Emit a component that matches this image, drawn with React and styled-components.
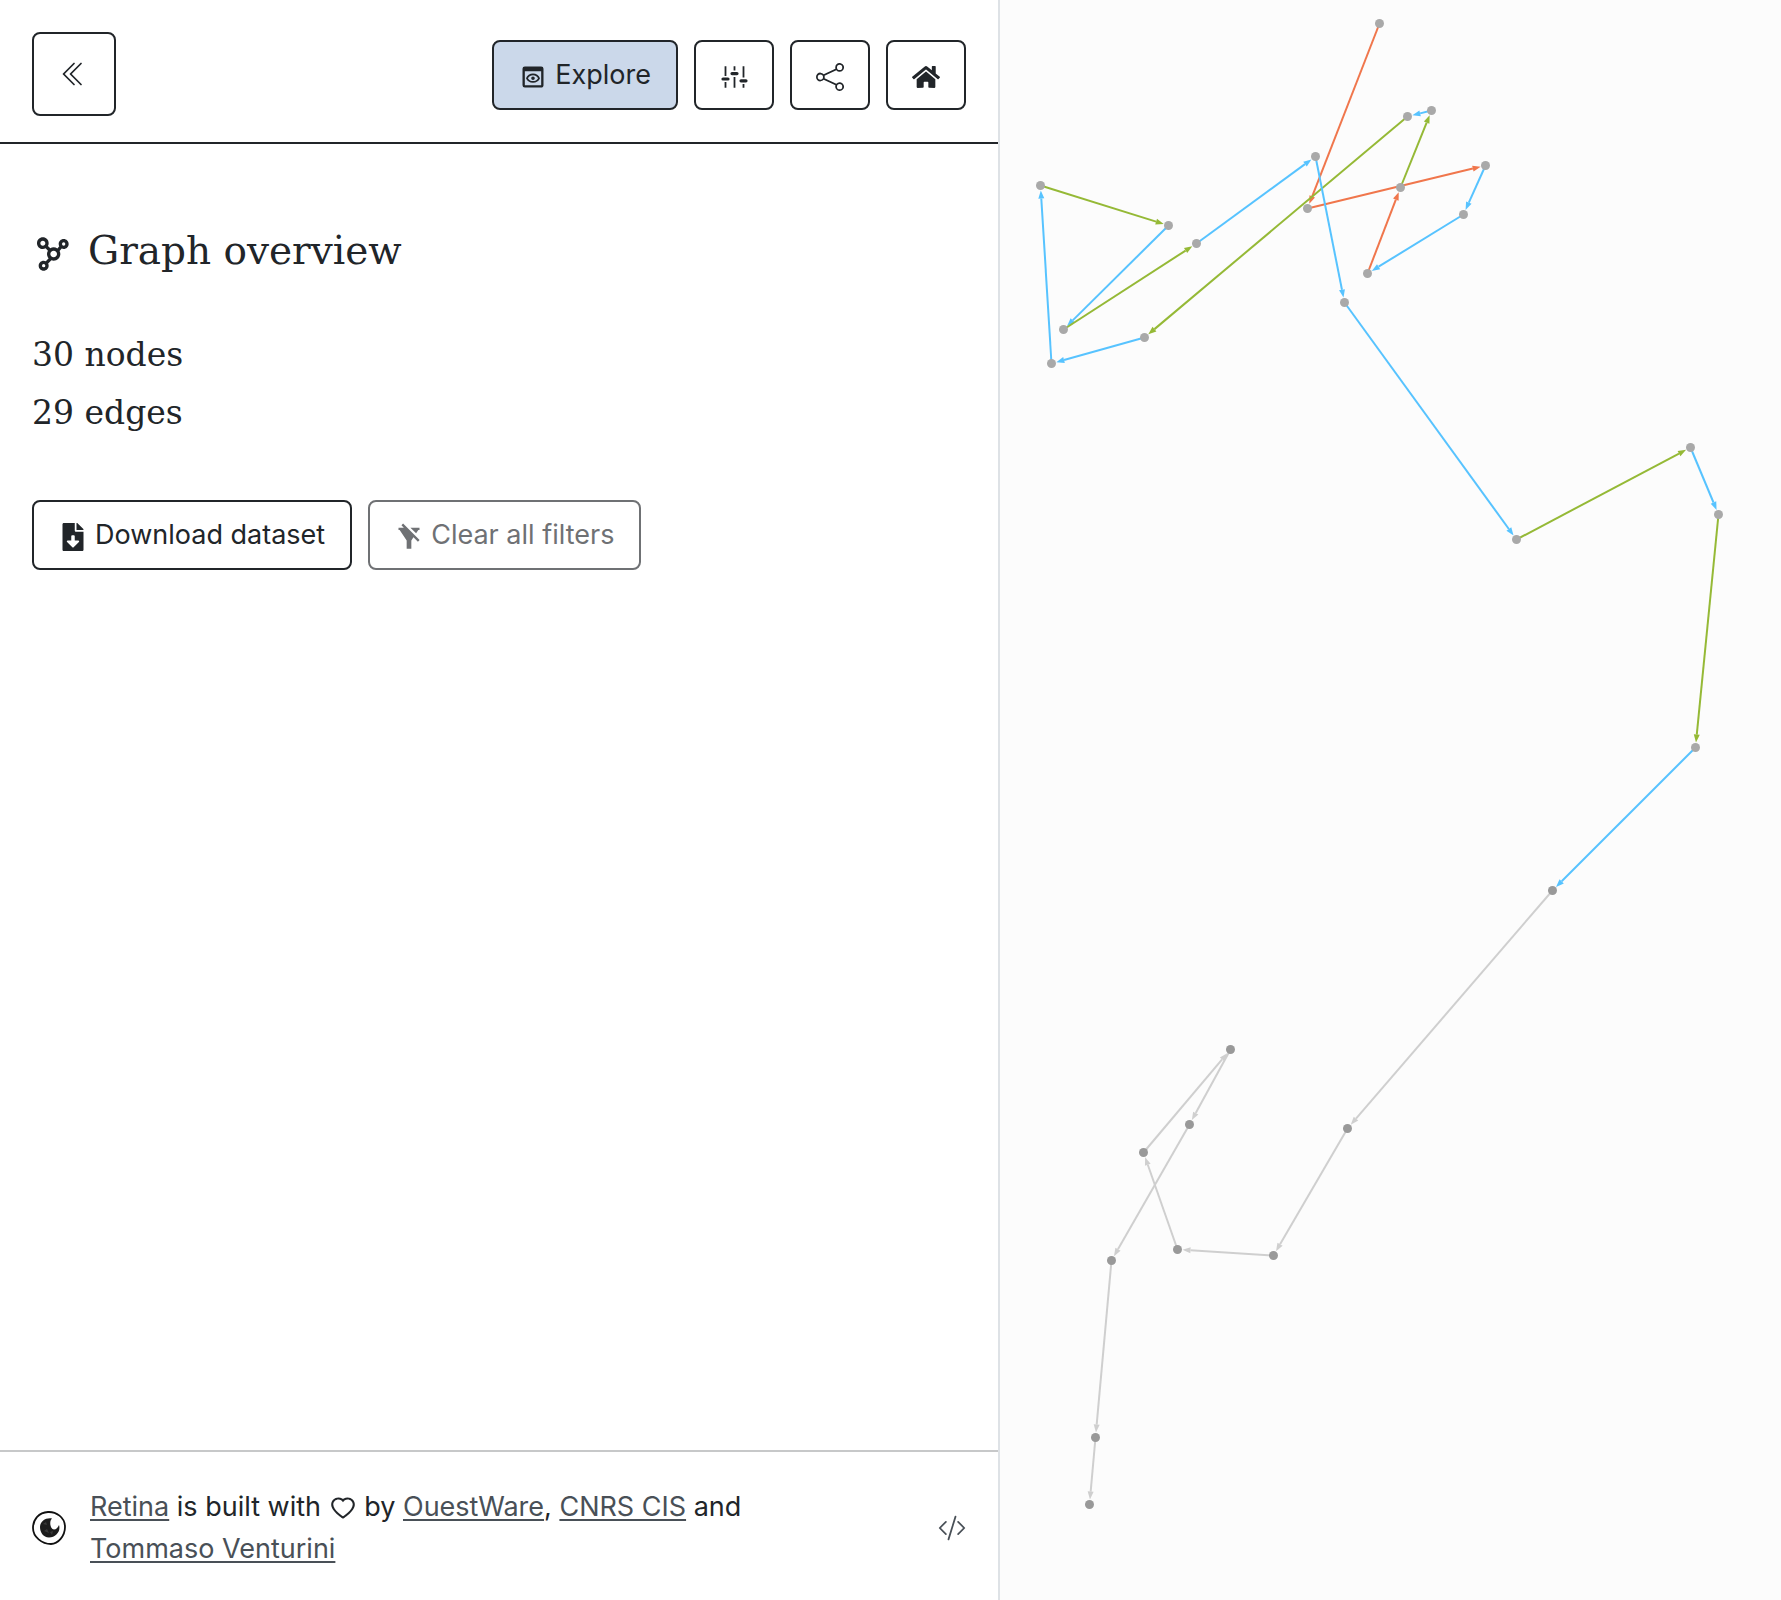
import React from "react";
import styled, { createGlobalStyle } from "styled-components";
import { BsChevronDoubleLeft, BsShare, BsCodeSlash } from "react-icons/bs";
import { MdOutlinePreview } from "react-icons/md";
import { FaHome, FaFileDownload } from "react-icons/fa";
import { BiNetworkChart } from "react-icons/bi";
import { RiFilterOffFill } from "react-icons/ri";
import { AiOutlineHeart } from "react-icons/ai";

const ink = "#212529";

const GlobalStyle = createGlobalStyle`
  *, *::before, *::after { box-sizing: border-box; }
  body {
    margin: 0;
    background: #fff;
    color: ${ink};
    font-family: Inter, "Liberation Sans", sans-serif;
    font-size: 27px;
    line-height: 42px;
  }
`;

const Page = styled.div`
  display: grid;
  grid-template-columns: minmax(0, 1000fr) minmax(0, 781fr);
  min-height: 100vh;
`;

const Panel = styled.section`
  display: flex;
  flex-direction: column;
  border-right: 2px solid #dee2e6;
`;

const Header = styled.header`
  display: flex;
  align-items: center;
  justify-content: space-between;
  padding: 32px 32px 26px;
  border-bottom: 2px solid ${ink};
`;

const Toolbar = styled.nav`
  display: flex;
  gap: 16px;
  padding-top: 2px;
`;

const Button = styled.button`
  display: inline-flex;
  align-items: center;
  justify-content: center;
  gap: 8px;
  height: 70px;
  min-width: 80px;
  padding: 0 25px;
  border: 2px solid ${ink};
  border-radius: 8px;
  background: ${(p) => (p.$active ? "#cbd8ea" : "transparent")};
  color: ${ink};
  font: inherit;
  white-space: nowrap;

  &:disabled {
    border-color: #6f7174;
    color: #6f7174;
  }

  svg {
    flex: none;
    margin-top: 4px;
  }
`;

const IconButton = styled(Button)`
  width: 80px;
  padding: 0;
`;

const CollapseButton = styled(IconButton)`
  width: 84px;
  height: 84px;

  svg {
    margin-top: 0;
  }
`;

const Body = styled.main`
  flex: 1;
  padding: 73px 32px 32px;
`;

const Title = styled.h1`
  margin: 0 0 41px;
  font-family: "DejaVu Serif", serif;
  font-size: 39px;
  font-weight: 400;
  line-height: 68px;

  svg {
    margin-right: 16px;
    vertical-align: -10px;
  }
`;

const Stats = styled.div`
  margin-bottom: 58px;
  font-family: "DejaVu Serif", serif;
  font-size: 33px;
  line-height: 58px;
`;

const Actions = styled.div`
  display: flex;
  flex-wrap: wrap;
  gap: 16px;
`;

const Footer = styled.footer`
  display: flex;
  align-items: center;
  gap: 24px;
  padding: 34px 32px 30px;
  border-top: 2px solid #c7c8c9;
`;

const Credits = styled.p`
  flex: 1;
  margin: 0;

  svg {
    vertical-align: -6px;
  }
`;

const Link = styled.a`
  color: #495057;
  white-space: nowrap;
  text-decoration: underline;
  text-decoration-thickness: 2px;
  text-underline-offset: 3px;
`;

const IconLink = styled.a`
  display: flex;
  color: #495057;
`;

const GraphArea = styled.div`
  background: #fcfcfc;
  display: flex;
`;

const Canvas = styled.svg`
  width: 100%;
  height: auto;
`;

const BLUE = "#57c3ff";
const GREEN = "#95b936";
const ORANGE = "#f0764c";
const GREY = "#cfcfcf";

/* Nodes in path order, each with the colour of the edge that leaves it. */
const nodes = [
  [379, 23, ORANGE],
  [307, 208, ORANGE],
  [485, 165, BLUE],
  [463, 214, BLUE],
  [367, 273, ORANGE],
  [400, 187, GREEN],
  [431, 110, BLUE],
  [407, 116, GREEN],
  [144, 337, BLUE],
  [51, 363, BLUE],
  [40, 185, GREEN],
  [168, 225, BLUE],
  [63, 329, GREEN],
  [196, 243, BLUE],
  [315, 156, BLUE],
  [344, 302, BLUE],
  [516, 539, GREEN],
  [690, 447, BLUE],
  [718, 514, GREEN],
  [695, 747, BLUE],
  [552, 890, GREY],
  [347, 1128, GREY],
  [273, 1255, GREY],
  [177, 1249, GREY],
  [143, 1152, GREY],
  [230, 1049, GREY],
  [189, 1124, GREY],
  [111, 1260, GREY],
  [95, 1437, GREY],
  [89, 1504, null],
];

function Edge({ from, to }) {
  const [x1, y1, color] = from;
  const [x2, y2] = to;
  const length = Math.hypot(x2 - x1, y2 - y1);
  const ux = (x2 - x1) / length;
  const uy = (y2 - y1) / length;
  const tip = [x2 - ux * 5, y2 - uy * 5];
  const base = [x2 - ux * 13, y2 - uy * 13];
  const head = [
    tip,
    [base[0] - uy * 3, base[1] + ux * 3],
    [base[0] + uy * 3, base[1] - ux * 3],
  ];
  return (
    <g>
      <line x1={x1} y1={y1} x2={base[0]} y2={base[1]} stroke={color} strokeWidth="2" />
      <polygon points={head.map((p) => p.join(",")).join(" ")} fill={color} />
    </g>
  );
}

function Graph() {
  return (
    <Canvas viewBox="0 0 781 1600" preserveAspectRatio="xMinYMin meet" role="img" aria-label="Graph">
      <g transform="translate(0.5 0.5)">
        {nodes.slice(0, -1).map((node, i) => (
          <Edge key={i} from={node} to={nodes[i + 1]} />
        ))}
        {nodes.map(([x, y], i) => (
          <circle key={i} cx={x} cy={y} r="4.5" fill={i < 20 ? "#a9a9a9" : "#999"} />
        ))}
      </g>
    </Canvas>
  );
}

function SlidersIcon() {
  return (
    <svg width="28" height="28" viewBox="0 0 28 28" stroke="currentColor" aria-hidden="true">
      <path
        d="M5.500 3.300V13M5.500 19V24.700M14.500 3.300V7.500M14.500 14V24.700M23.500 3.300V14.500M23.500 21V24.700"
        strokeWidth="1.800"
      />
      <path d="M3 16H8M12 10.600H17M21 17.800H26" strokeWidth="3.200" strokeLinecap="round" />
    </svg>
  );
}

function Logo() {
  return (
    <svg width="34" height="34" viewBox="0 0 34 34" aria-hidden="true">
      <path
        d="M16 1C24 .6 33 6 33 16C33 25 26 33 19 33C10 33 1 26 1 17C1 8 7 1.400 16 1Z"
        fill="#fff"
        stroke="#111"
        strokeWidth="1.800"
      />
      <path
        d="M20 7.500C17 10 18 18 22 18.500C24 18.500 26 16.500 27 14C29 20 24 26.500 17 26.500C11 26.500 8 21 8 16C8 11 13 6.500 20 7.500Z"
        fill="#1c1c1c"
      />
      <path d="M11 13L14 11L15 14ZM12 20L15 18L17 22ZM18 21L21 20L20 24Z" fill="#383838" />
    </svg>
  );
}

export default function App() {
  return (
    <Page>
      <GlobalStyle />
      <Panel>
        <Header>
          <CollapseButton aria-label="Collapse panel">
            <BsChevronDoubleLeft size={28} />
          </CollapseButton>
          <Toolbar>
            <Button $active>
              <MdOutlinePreview size={28} />
              Explore
            </Button>
            <IconButton aria-label="Settings">
              <SlidersIcon />
            </IconButton>
            <IconButton aria-label="Share">
              <BsShare size={28} />
            </IconButton>
            <IconButton aria-label="Home">
              <FaHome size={28} />
            </IconButton>
          </Toolbar>
        </Header>
        <Body>
          <Title>
            <BiNetworkChart size={40} />
            Graph overview
          </Title>
          <Stats>
            <div>30 nodes</div>
            <div>29 edges</div>
          </Stats>
          <Actions>
            <Button>
              <FaFileDownload size={28} />
              Download dataset
            </Button>
            <Button disabled>
              <RiFilterOffFill size={28} />
              Clear all filters
            </Button>
          </Actions>
        </Body>
        <Footer>
          <Logo />
          <Credits>
            <Link href="#retina">Retina</Link> is built with <AiOutlineHeart size={28} /> by{" "}
            <Link href="#ouestware">OuestWare</Link>, <Link href="#cnrs-cis">CNRS CIS</Link> and{" "}
            <Link href="#tommaso-venturini">Tommaso Venturini</Link>
          </Credits>
          <IconLink href="#source" aria-label="Source code">
            <BsCodeSlash size={28} />
          </IconLink>
        </Footer>
      </Panel>
      <GraphArea>
        <Graph />
      </GraphArea>
    </Page>
  );
}
